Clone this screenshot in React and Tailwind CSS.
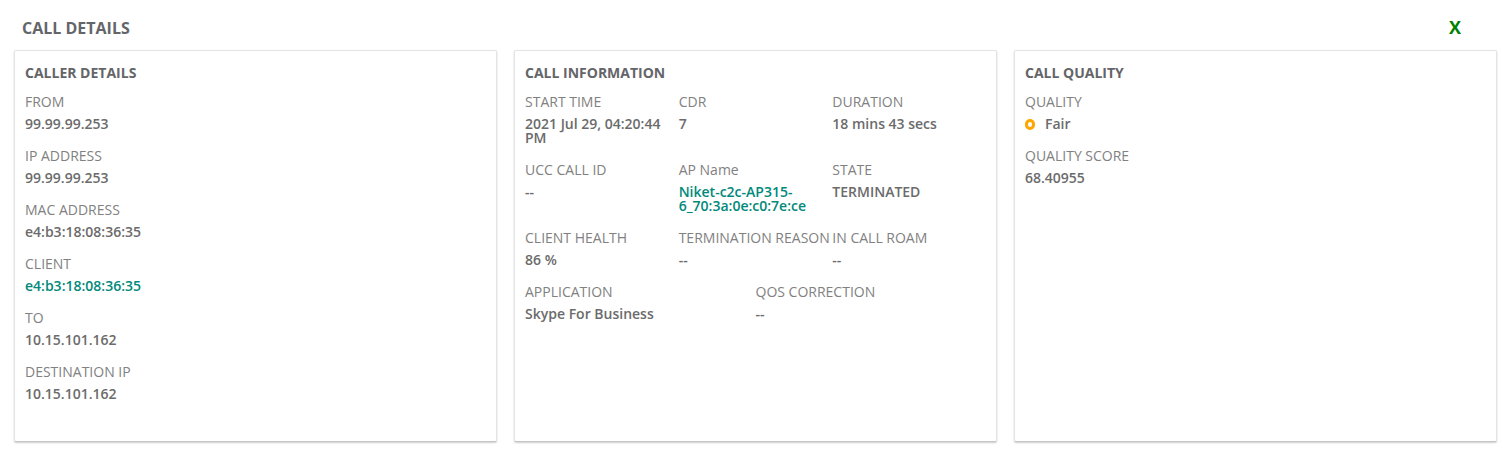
const caller = [
  { label: 'FROM', value: '99.99.99.253' },
  { label: 'IP ADDRESS', value: '99.99.99.253' },
  { label: 'MAC ADDRESS', value: 'e4:b3:18:08:36:35' },
  { label: 'CLIENT', value: 'e4:b3:18:08:36:35', link: true },
  { label: 'TO', value: '10.15.101.162' },
  { label: 'DESTINATION IP', value: '10.15.101.162' },
]

const callInfo = [
  { label: 'START TIME', value: '2021 Jul 29, 04:20:44 PM' },
  { label: 'CDR', value: '7' },
  { label: 'DURATION', value: '18 mins 43 secs' },
  { label: 'UCC CALL ID', value: '--' },
  { label: 'AP Name', value: 'Niket-c2c-AP315-6_70:3a:0e:c0:7e:ce', link: true },
  { label: 'STATE', value: 'TERMINATED' },
  { label: 'CLIENT HEALTH', value: '86 %' },
  { label: 'TERMINATION REASON', value: '--' },
  { label: 'IN CALL ROAM', value: '--' },
]

const appInfo = [
  { label: 'APPLICATION', value: 'Skype For Business' },
  { label: 'QOS CORRECTION', value: '--' },
]

function Card({ title, children }) {
  return (
    <section className="min-h-[392px] rounded-xs border border-[#e4e4e4] border-b-[#c4c4c4] bg-white px-[10px] pt-3 shadow-[0_1px_2px_rgba(0,0,0,0.2)]">
      <h2 className="text-sm leading-5 font-bold text-[#646569]">{title}</h2>
      {children}
    </section>
  )
}

function Field({ label, link, children }) {
  return (
    <div className="pb-[15px]">
      <dt className="text-sm leading-5 whitespace-nowrap text-[#818181]">{label}</dt>
      <dd className="pt-[5px] text-sm leading-[14px] font-semibold text-[#6b6b6b]">
        {link ? <a href="#" className="text-[#01897b]">{children}</a> : children}
      </dd>
    </div>
  )
}

export default function App() {
  return (
    <main className="bg-white pr-[6px] pb-2 pl-[14px] font-['Open_Sans',sans-serif]">
      <header className="flex items-start justify-between pt-4 pr-9 pb-[10px] pl-2">
        <h1 className="text-base leading-6 font-bold text-[#646569]">CALL DETAILS</h1>
        <button type="button" aria-label="Close" className="text-lg leading-[22px] font-bold text-[#008000]">X</button>
      </header>

      <div className="grid grid-cols-3 gap-[17px]">
        <Card title="CALLER DETAILS">
          <dl className="pt-[9px]">
            {caller.map((f) => <Field key={f.label} {...f}>{f.value}</Field>)}
          </dl>
        </Card>

        <Card title="CALL INFORMATION">
          <dl className="grid grid-cols-3 pt-[9px]">
            {callInfo.map((f) => <Field key={f.label} {...f}>{f.value}</Field>)}
          </dl>
          <dl className="grid grid-cols-2">
            {appInfo.map((f) => <Field key={f.label} {...f}>{f.value}</Field>)}
          </dl>
        </Card>

        <Card title="CALL QUALITY">
          <dl className="pt-[9px]">
            <Field label="QUALITY">
              <span className="flex items-center gap-[10px]">
                <span className="h-[11px] w-[10px] rounded-full border-3 border-[#ffa500]" />
                Fair
              </span>
            </Field>
            <Field label="QUALITY SCORE">68.40955</Field>
          </dl>
        </Card>
      </div>
    </main>
  )
}
